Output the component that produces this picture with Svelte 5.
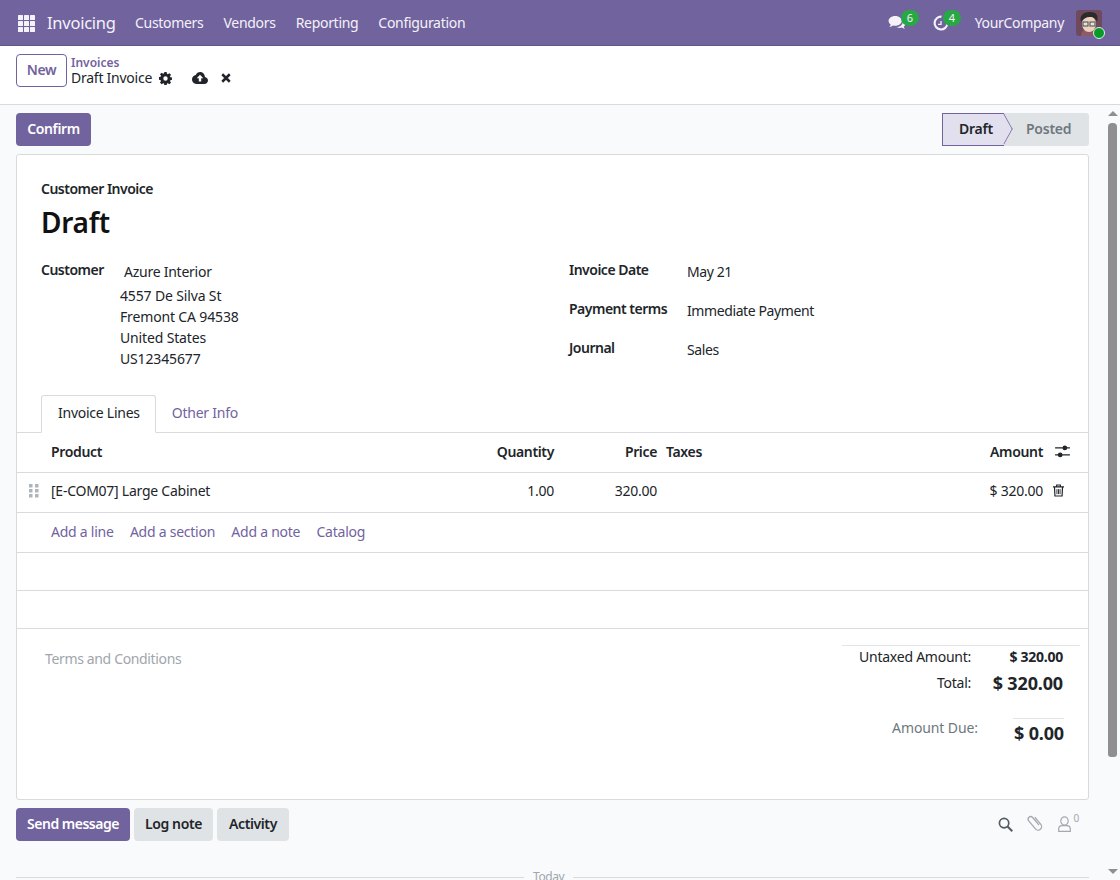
<script>
	const navItems = ['Customers', 'Vendors', 'Reporting', 'Configuration'];
	const address = ['4557 De Silva St', 'Fremont CA 94538', 'United States', 'US12345677'];
	const details = [
		{ label: 'Invoice Date', value: 'May 21' },
		{ label: 'Payment terms', value: 'Immediate Payment' },
		{ label: 'Journal', value: 'Sales' }
	];
	const lineLinks = ['Add a line', 'Add a section', 'Add a note', 'Catalog'];
</script>

<div class="app">
	<header class="navbar">
		<svg class="apps" viewBox="0 0 17 17" width="17" height="17" fill="#f4f2f8">
			{#each [0, 6, 12] as y}
				{#each [0, 6, 12] as x}
					<rect {x} {y} width="5" height="5" rx="0.6" />
				{/each}
			{/each}
		</svg>
		<span class="brand">Invoicing</span>
		<nav class="menu">
			{#each navItems as item}
				<span>{item}</span>
			{/each}
		</nav>
		<div class="systray">
			<span class="tray-item">
				<svg viewBox="0 0 20 18" width="18" height="16" fill="#f4f2f8">
					<path d="M8 1c4.200 0 7.400 2.500 7.400 5.600S12.200 12.200 8 12.200c-.9 0-1.700-.1-2.500-.3C4.300 12.800 3 13.400 1.400 13.600c.8-.9 1.300-1.800 1.500-2.900C1.300 9.700.5 8.200.5 6.600.5 3.500 3.800 1 8 1z" />
					<path d="M16.800 5.500c1.700 1 2.700 2.500 2.700 4.100 0 1.400-.7 2.600-1.900 3.500.2 1 .7 1.900 1.400 2.600-1.500-.2-2.700-.7-3.700-1.500-.8.2-1.500.3-2.300.3-1.400 0-2.700-.3-3.800-.9 4 0 7.800-2.600 7.600-8.100z" />
				</svg>
				<span class="count">6</span>
			</span>
			<span class="tray-item clock">
				<svg viewBox="0 0 16 16" width="16" height="16" fill="none" stroke="#f4f2f8" stroke-width="2.200">
					<path d="M8.500 1.700A6.400 6.400 0 1 0 14.400 8.500" />
					<path d="M8 6v3.300H5" stroke-width="1.300" />
				</svg>
				<span class="count">4</span>
			</span>
			<span class="company">YourCompany</span>
			<span class="avatar">
				<svg viewBox="0 0 26 26" width="26" height="26">
					<rect width="26" height="26" rx="3" fill="#6e4a5c" />
					<path d="M5 26c0-5 3-7 8-7s8 2 8 7z" fill="#8d5a66" />
					<ellipse cx="13" cy="14" rx="7" ry="8" fill="#efd2bd" />
					<path d="M5 12C3 5 8 2 14 2s9 3 7 10c-1-3-3-5-7-5s-7 2-9 5z" fill="#2b2a2c" />
					<rect x="7" y="12" width="5" height="4" fill="#dfe6e0" stroke="#4a4a4a" />
					<rect x="14" y="12" width="5" height="4" fill="#dfe6e0" stroke="#4a4a4a" />
				</svg>
				<i class="online"></i>
			</span>
		</div>
	</header>

	<section class="control-panel">
		<button class="btn-new">New</button>
		<div class="crumbs">
			<span class="crumb-link">Invoices</span>
			<div class="crumb-current">
				<span>Draft Invoice</span>
				<svg class="gear" viewBox="0 0 16 16" width="13" height="13" fill="#212529">
					<path fill-rule="evenodd" d="M6.600 0h2.800l.4 2.200 1.100.5L12.800 1.400l2 2-1.300 1.900.5 1.100 2 .4v2.800l-2 .4-.5 1.100 1.300 1.900-2 2-1.900-1.300-1.100.5-.4 2.200H6.600l-.4-2.200-1.100-.5-1.900 1.300-2-2 1.300-1.900-.5-1.100-2-.4V6.200l2-.4.5-1.100L1.200 2.800l2-2 1.900 1.300 1.100-.5zM8 5.300a2.700 2.700 0 1 0 0 5.400 2.700 2.700 0 0 0 0-5.400z" />
				</svg>
				<svg class="cloud" viewBox="0 0 16 12" width="16" height="12" fill="#212529">
					<path fill-rule="evenodd" d="M12.900 4.900C12.900 2.200 10.800 0 8.200 0 6.200 0 4.500 1.200 3.800 3 1.700 3.300 0 5 0 7.300 0 9.900 2 12 4.500 12h7.800C14.400 12 16 10.300 16 8.200c0-1.600-1.300-3-3.100-3.300zM8 2.800l3.300 3.500H9.200V9.500H6.800V6.300H4.700z" />
				</svg>
				<svg class="close" viewBox="0 0 12 12" width="10" height="10" fill="none" stroke="#212529" stroke-width="3">
					<path d="M1.500 1.500l9 9M10.500 1.500l-9 9" />
				</svg>
			</div>
		</div>
	</section>

	<div class="body-row">
		<main class="content">
			<div class="action-bar">
				<button class="btn-primary confirm">Confirm</button>
				<div class="statusbar">
					<span class="step active">Draft</span>
					<span class="step">Posted</span>
				</div>
			</div>

			<article class="sheet">
				<div class="sheet-head">
					<div class="move-type">Customer Invoice</div>
					<h1>Draft</h1>
				</div>

				<div class="fields">
					<div class="customer">
						<span class="label">Customer</span>
						<div class="customer-value">
							<div class="partner">Azure Interior</div>
							{#each address as line}
								<div class="addr">{line}</div>
							{/each}
						</div>
					</div>
					<div class="details">
						{#each details as row}
							<div class="detail">
								<span class="label">{row.label}</span>
								<span class="detail-value">{row.value}</span>
							</div>
						{/each}
					</div>
				</div>

				<div class="tabs">
					<span class="tab active">Invoice Lines</span>
					<span class="tab">Other Info</span>
				</div>

				<div class="lines">
					<div class="line head">
						<span class="c-handle"></span>
						<span class="c-product">Product</span>
						<span class="c-qty">Quantity</span>
						<span class="c-price">Price</span>
						<span class="c-taxes">Taxes</span>
						<span class="c-amount">Amount</span>
						<span class="c-act">
							<svg viewBox="0 0 16 14" width="15" height="13" fill="#212529">
								<path d="M0 2.500h16v1.300H0zM0 10h16v1.300H0z" />
								<circle cx="10.500" cy="3.100" r="2.500" />
								<circle cx="5.500" cy="10.700" r="2.500" />
							</svg>
						</span>
					</div>
					<div class="line item">
						<span class="c-handle">
							<svg viewBox="0 0 10 14" width="10" height="14" fill="#adb5bd">
								{#each [0, 5, 10] as y}
									<rect x="0" {y} width="3.500" height="3.500" />
									<rect x="6" {y} width="3.500" height="3.500" />
								{/each}
							</svg>
						</span>
						<span class="c-product">[E-COM07] Large Cabinet</span>
						<span class="c-qty">1.00</span>
						<span class="c-price">320.00</span>
						<span class="c-taxes"></span>
						<span class="c-amount">$ 320.00</span>
						<span class="c-act trash">
							<svg viewBox="0 0 12 14" width="11" height="13" fill="none" stroke="#212529" stroke-width="1.300">
								<path d="M0 3h12M4 3V1h4v2M1.600 3l.5 10h7.800l.5-10" />
								<path d="M4.300 5.500v5.500M6 5.500v5.500M7.700 5.500v5.500" stroke-width="1" />
							</svg>
						</span>
					</div>
					<div class="line add">
						<span class="c-handle"></span>
						<div class="add-links">
							{#each lineLinks as link}
								<span>{link}</span>
							{/each}
						</div>
					</div>
					<div class="line blank"></div>
					<div class="line blank"></div>
				</div>

				<div class="footer-row">
					<div class="terms">Terms and Conditions</div>
					<div class="totals">
						<div class="total-row untaxed">
							<span>Untaxed Amount:</span>
							<strong>$ 320.00</strong>
						</div>
						<div class="total-row grand">
							<span>Total:</span>
							<strong>$ 320.00</strong>
						</div>
						<div class="total-row due">
							<span>Amount Due:</span>
							<strong>$ 0.00</strong>
						</div>
					</div>
				</div>
			</article>

			<div class="chatter-bar">
				<button class="btn-primary send">Send message</button>
				<button class="btn-gray lognote">Log note</button>
				<button class="btn-gray activity">Activity</button>
				<div class="chatter-icons">
					<svg viewBox="0 0 16 16" width="15" height="15" fill="none" stroke="#555c63" stroke-width="1.800">
						<circle cx="6.500" cy="6.500" r="5" />
						<path d="M10.200 10.200l5 5" stroke-width="2.200" />
					</svg>
					<svg class="clip" viewBox="0 0 16 18" width="19" height="21" fill="none" stroke="#a3a9af" stroke-width="1.100">
						<path d="M11 4.500v8a3 3 0 0 1-6 0V3.500a2.200 2.200 0 0 1 4.400 0V12" transform="rotate(-40 8 9)" />
					</svg>
					<span class="followers">
						<svg viewBox="0 0 13 16" width="13" height="16" fill="none" stroke="#a3a9af" stroke-width="1.200">
							<ellipse cx="6.500" cy="5" rx="3.700" ry="4.200" />
							<path d="M.7 15.300v-2.300c0-2 1.600-3.400 3.500-3.400h4.600c1.900 0 3.500 1.400 3.500 3.400v2.300z" />
						</svg>
						<sup>0</sup>
					</span>
				</div>
			</div>

			<div class="today"><span>Today</span></div>
		</main>

		<aside class="scrollbar">
			<i class="arrow up"></i>
			<div class="thumb"></div>
			<i class="arrow down"></i>
		</aside>
	</div>
</div>

<style>
	:global(body) {
		margin: 0;
		font-family: "Noto Sans", "Open Sans", sans-serif;
		font-size: 14px;
		color: #212529;
		background: #f9fafb;
	}

	.app {
		width: 1120px;
		height: 880px;
		display: flex;
		flex-direction: column;
		overflow: hidden;
		letter-spacing: -0.25px;
	}

	button {
		font: inherit;
		letter-spacing: -0.4px;
		border: 0;
		font-weight: 600;
		height: 33px;
		border-radius: 4px;
		padding: 0 0 2px;
		flex: none;
	}

	.navbar {
		height: 46px;
		flex: none;
		box-sizing: border-box;
		background: #71639e;
		color: #f4f2f8;
		display: flex;
		align-items: center;
		padding: 0 18px 0 18px;
		box-shadow: inset 0 -1px 0 #625689;
	}

	.brand {
		font-size: 16.500px;
		margin: -2px 0 0 12px;
		width: 88px;
	}

	.menu {
		display: flex;
		gap: 20px;
		margin-top: -2px;
		letter-spacing: -0.3px;
	}

	.systray {
		margin-left: auto;
		display: flex;
		align-items: center;
	}

	.tray-item {
		position: relative;
		width: 18px;
		height: 16px;
		display: block;
	}

	.tray-item.clock {
		margin-left: 27px;
		width: 16px;
	}

	.count {
		position: absolute;
		left: 13px;
		top: -5px;
		width: 18px;
		height: 16px;
		border-radius: 8px;
		background: #28a745;
		font-size: 11px;
		line-height: 15px;
		text-align: center;
		color: #f4f2f8;
	}

	.clock .count {
		left: 10px;
	}

	.company {
		margin: -2px 0 0 26px;
		letter-spacing: -0.32px;
	}

	.avatar {
		position: relative;
		display: block;
		width: 26px;
		height: 26px;
		margin-left: 12px;
	}

	.online {
		position: absolute;
		right: -3px;
		bottom: -3px;
		width: 10px;
		height: 10px;
		border-radius: 50%;
		background: #0a9a2a;
		border: 1px solid #dff2e4;
	}

	.control-panel {
		height: 59px;
		flex: none;
		box-sizing: border-box;
		background: #fff;
		border-bottom: 1px solid #d8dadd;
		display: flex;
		padding: 8px 16px 0;
		gap: 4px;
	}

	.btn-new {
		width: 51px;
		background: #fff;
		border: 1px solid #71639e;
		color: #71639e;
	}

	.crumbs {
		display: flex;
		flex-direction: column;
		padding-top: 1px;
	}

	.crumb-link {
		font-size: 12px;
		line-height: 15px;
		font-weight: 600;
		color: #71639e;
		letter-spacing: 0;
	}

	.crumb-current {
		display: flex;
		align-items: center;
		line-height: 16px;
	}

	.gear {
		margin-left: 7px;
	}

	.cloud {
		margin-left: 20px;
	}

	.close {
		margin-left: 13px;
	}

	.body-row {
		flex: 1;
		min-height: 0;
		display: flex;
	}

	.content {
		flex: 1;
		min-width: 0;
		padding: 8px 16px 0;
		overflow: hidden;
	}

	.action-bar {
		display: flex;
		justify-content: space-between;
		height: 33px;
	}

	.btn-primary {
		background: #71639e;
		color: #fff;
	}

	.btn-gray {
		background: #e0e3e6;
		color: #212529;
	}

	.confirm {
		width: 75px;
	}

	.send {
		width: 114px;
		letter-spacing: -0.5px;
	}

	.lognote {
		width: 79px;
	}

	.activity {
		width: 72px;
	}

	.statusbar {
		display: flex;
		width: 147px;
		height: 33px;
		background: #e0e3e6;
		border-radius: 0 3px 3px 0;
		font-weight: 600;
		line-height: 29px;
	}

	.step {
		color: #6f777e;
		padding: 1px 0 0 22px;
	}

	.step.active {
		position: relative;
		box-sizing: border-box;
		width: 62px;
		padding: 0 0 0 16px;
		color: #212529;
		background: #e2e0ee;
		border: 1px solid #71639e;
		border-right: 0;
	}

	.step.active::after {
		content: "";
		position: absolute;
		right: -11px;
		top: 4px;
		width: 22px;
		height: 22px;
		box-sizing: border-box;
		background: #e2e0ee;
		border-top: 1px solid #71639e;
		border-right: 1px solid #71639e;
		transform: scaleX(0.55) rotate(45deg);
	}

	.sheet {
		margin-top: 8px;
		height: 646px;
		box-sizing: border-box;
		background: #fff;
		border: 1px solid #d8dadd;
		border-radius: 3px;
	}

	.sheet-head {
		padding: 24px 24px 0;
	}

	.move-type {
		font-weight: 600;
		line-height: 20px;
		letter-spacing: -0.5px;
	}

	h1 {
		margin: 5px 0 0;
		font-size: 28px;
		line-height: 36px;
		font-weight: 600;
		color: #111;
	}

	.fields {
		display: grid;
		grid-template-columns: 528px 1fr;
		padding: 0 24px;
		margin-top: 20px;
		height: 121px;
	}

	.label {
		font-weight: 600;
		line-height: 20px;
		letter-spacing: -0.5px;
	}

	.customer {
		display: grid;
		grid-template-columns: 79px 1fr;
	}

	.partner {
		padding: 2px 0 0 4px;
		line-height: 20px;
		margin-bottom: 3px;
	}

	.addr {
		line-height: 21px;
		letter-spacing: -0.15px;
	}

	.details {
		display: flex;
		flex-direction: column;
		gap: 18px;
	}

	.detail {
		display: grid;
		grid-template-columns: 118px 1fr;
	}

	.detail-value {
		padding-top: 3px;
		line-height: 18px;
		letter-spacing: -0.4px;
	}

	.tabs {
		display: flex;
		align-items: flex-end;
		height: 39px;
		margin-top: 12px;
		padding-left: 24px;
		border-bottom: 1px solid #d8dadd;
	}

	.tab {
		padding: 0 15px 0 16px;
		line-height: 33px;
		color: #71639e;
		box-sizing: border-box;
		height: 38px;
		margin-bottom: -1px;
		border: 1px solid transparent;
	}

	.tab + .tab {
		margin-left: -1px;
	}

	.tab.active {
		color: #212529;
		background: #fff;
		border-color: #d8dadd;
		border-bottom-color: #fff;
		border-radius: 3px 3px 0 0;
	}

	.lines {
		display: flex;
		flex-direction: column;
	}

	.line {
		display: flex;
		align-items: center;
		height: 40px;
		box-sizing: border-box;
		border-bottom: 1px solid #d8dadd;
		padding-bottom: 2px;
	}

	.line.item {
		padding-bottom: 4px;
	}

	.line.head {
		font-weight: 600;
		letter-spacing: -0.35px;
	}

	.line.blank {
		height: 38px;
	}

	.c-handle {
		width: 34px;
		flex: none;
		display: flex;
		justify-content: center;
	}

	.c-product {
		width: 380px;
		flex: none;
	}

	.c-qty {
		width: 123px;
		flex: none;
		text-align: right;
	}

	.c-price {
		width: 103px;
		flex: none;
		text-align: right;
	}

	.c-taxes {
		width: 100px;
		flex: none;
		margin-left: 9px;
	}

	.c-amount {
		width: 277px;
		flex: none;
		text-align: right;
	}

	.c-act {
		margin-left: 12px;
		display: flex;
	}

	.c-act.trash {
		margin-left: 10px;
	}

	.add-links {
		display: flex;
		gap: 16.300px;
		color: #71639e;
	}

	.footer-row {
		display: flex;
		justify-content: space-between;
		padding: 16px 8px 0 28px;
	}

	.terms {
		color: #a0a6ac;
		line-height: 28px;
		letter-spacing: -0.35px;
	}

	.totals {
		width: 238px;
		border-top: 1px solid #e2e4e7;
	}

	.total-row {
		display: grid;
		grid-template-columns: 129px 92px;
		align-items: center;
	}

	.total-row span {
		text-align: right;
	}

	.total-row strong {
		text-align: right;
		font-weight: 700;
	}

	.untaxed {
		height: 20px;
	}

	.grand {
		height: 30px;
		margin-top: 2px;
	}

	.grand span {
		margin-top: -2px;
	}

	.grand strong,
	.due strong {
		font-size: 18px;
		letter-spacing: -0.15px;
	}

	.due {
		grid-template-columns: 136px 86px;
		margin-top: 18px;
		height: 30px;
	}

	.due span {
		color: #6f777e;
		margin-top: -8px;
		letter-spacing: -0.1px;
	}

	.due strong {
		border-top: 1px solid #e2e4e7;
		margin-left: 35px;
		padding-top: 2px;
	}

	.chatter-bar {
		display: flex;
		gap: 4px;
		margin-top: 8px;
		align-items: center;
	}

	.chatter-icons {
		margin-left: auto;
		display: flex;
		align-items: center;
		gap: 13px;
		padding-right: 10px;
	}

	.clip {
		margin-top: -3px;
	}

	.followers {
		display: flex;
		align-items: flex-start;
		margin-top: -2px;
		color: #a3a9af;
	}

	.followers sup {
		font-size: 10px;
		line-height: 10px;
		margin-left: 3px;
		margin-top: -3px;
	}

	.today {
		margin-top: 28px;
		display: flex;
		align-items: center;
		gap: 9px;
		color: #a0a6ac;
		font-size: 12px;
		line-height: 16px;
		letter-spacing: -0.4px;
	}

	.today::before,
	.today::after {
		content: "";
		height: 1px;
		background: #d8dadd;
	}

	.today::before {
		flex: 0 0 508px;
	}

	.today::after {
		flex: 1;
	}

	.scrollbar {
		width: 15px;
		flex: none;
		display: flex;
		flex-direction: column;
		align-items: center;
	}

	.thumb {
		width: 9px;
		height: 634px;
		margin-top: 7px;
		border-radius: 4px 4px 3px 3px;
		background: #8f8f8f;
	}

	.arrow {
		width: 0;
		height: 0;
		border-left: 5px solid transparent;
		border-right: 5px solid transparent;
	}

	.arrow.up {
		margin-top: 6px;
		border-bottom: 5px solid #8f8f8f;
	}

	.arrow.down {
		margin-top: auto;
		margin-bottom: 6px;
		border-top: 5px solid #8f8f8f;
	}
</style>
